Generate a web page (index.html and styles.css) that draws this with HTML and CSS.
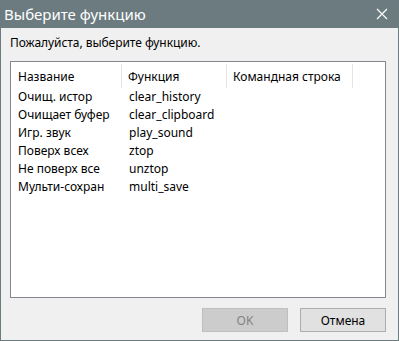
FILE: index.html
```html
<!DOCTYPE html>
<html lang="ru">
<head>
<meta charset="utf-8">
<title>Выберите функцию</title>
<link rel="stylesheet" href="styles.css">
</head>
<body>
<div class="window">
  <div class="titlebar">
    <span class="title">Выберите функцию</span>
    <span class="close">
      <svg width="12" height="12" viewBox="0 0 12 12"><path d="M1 1 L11 11 M11 1 L1 11" stroke="#ffffff" stroke-width="1.2" fill="none"/></svg>
    </span>
  </div>
  <div class="content">
    <div class="prompt">Пожалуйста, выберите функцию.</div>
    <div class="listbox">
      <div class="row header">
        <div class="cell c1 hd">Название</div>
        <div class="cell c2 hd">Функция</div>
        <div class="cell c3 hd">Командная строка</div>
      </div>
      <div class="row"><div class="cell c1">Очищ. истор</div><div class="cell c2">clear_history</div></div>
      <div class="row"><div class="cell c1">Очищает буфер</div><div class="cell c2">clear_clipboard</div></div>
      <div class="row"><div class="cell c1">Игр. звук</div><div class="cell c2">play_sound</div></div>
      <div class="row"><div class="cell c1">Поверх всех</div><div class="cell c2">ztop</div></div>
      <div class="row"><div class="cell c1">Не поверх все</div><div class="cell c2">unztop</div></div>
      <div class="row"><div class="cell c1">Мульти-сохран</div><div class="cell c2">multi_save</div></div>
    </div>
    <div class="buttons">
      <button class="btn disabled" disabled>OK</button>
      <button class="btn">Отмена</button>
    </div>
  </div>
</div>
</body>
</html>
```
FILE: styles.css
```css
html, body {
  margin: 0;
  padding: 0;
  background: #f0f0f0;
}
.window {
  width: 399px;
  height: 341px;
  box-sizing: border-box;
  border: 1px solid #6b7b7f;
  border-top: none;
  background: #f0f0f0;
  display: flex;
  flex-direction: column;
  font-family: "Noto Sans", "Open Sans", sans-serif;
  font-size: 12px;
  color: #000;
}
.titlebar {
  height: 28px;
  margin: 0 -1px;
  background: #6b7b7f;
  display: flex;
  align-items: center;
  justify-content: space-between;
  padding: 0 11px 0 4px;
}
.title {
  color: #ffffff;
  font-size: 15px;
  line-height: 28px;
}
.close {
  display: flex;
  align-items: center;
}
.content {
  flex: 1;
  display: flex;
  flex-direction: column;
  padding: 7px 12px 0 9px;
}
.prompt {
  line-height: 16px;
  height: 16px;
  letter-spacing: -0.05px;
}
.listbox {
  margin-top: 10px;
  width: 376px;
  height: 237px;
  box-sizing: border-box;
  border: 1px solid #828790;
  background: #ffffff;
}
.row {
  display: flex;
  height: 18px;
  align-items: center;
}
.row.header {
  height: 26px;
  align-items: flex-start;
}
.cell {
  padding-left: 7px;
  box-sizing: border-box;
  white-space: nowrap;
  line-height: 18px;
}
.c1 { width: 111px; }
.c2 { width: 105px; }
.c3 { width: 126px; }
.hd {
  border-right: 1px solid #e5e5e5;
  margin-top: 2px;
  height: 24px;
  padding-top: 4px;
  line-height: 18px;
  padding-left: 6px;
}
.hd.c1 { padding-left: 7px; }
.buttons {
  display: flex;
  justify-content: flex-end;
  gap: 12px;
  margin-top: 10px;
}
.btn {
  width: 86px;
  height: 24px;
  box-sizing: border-box;
  border: 1px solid #adadad;
  background: #e1e1e1;
  font-family: inherit;
  font-size: 12px;
  color: #000;
  padding: 0;
}
.btn.disabled {
  background: #cccccc;
  border-color: #bfbfbf;
  color: #838383;
}
```
